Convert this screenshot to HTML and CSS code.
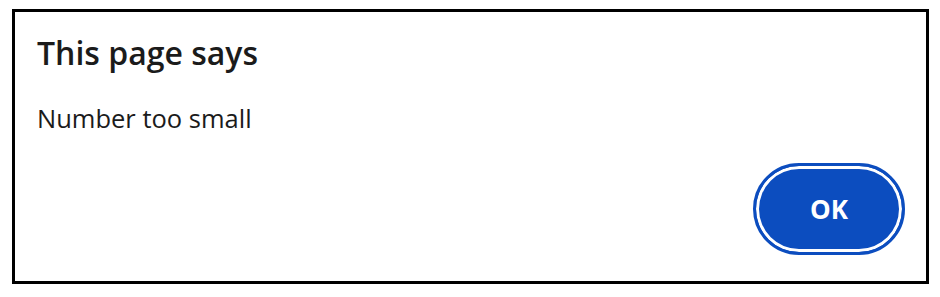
FILE: index.html
```html
<!DOCTYPE html>
<html lang="en">

<head>
    <meta charset="UTF-8">
    <meta name="viewport" content="width=device-width, initial-scale=1.0">
    <title>This page says</title>
    <link rel="stylesheet" href="styles.css">
</head>

<body>
    <div class="dialog">
        <h1 class="title">This page says</h1>
        <p class="message">Number too small</p>
        <div class="actions">
            <button class="ok">OK</button>
        </div>
    </div>
</body>

</html>
```

FILE: styles.css
```css
* {
    margin: 0;
    padding: 0;
    box-sizing: border-box;
}

body {
    background-color: white;
    font-family: "Open Sans", "Noto Sans", sans-serif;
    padding: 9px 11px 13px 12px;
}

.dialog {
    display: flex;
    flex-direction: column;
    width: 917px;
    height: 275px;
    border: 3px solid #000;
    background-color: white;
    padding: 21px 21px 26px 22px;
}

.title {
    font-size: 32px;
    font-weight: 600;
    line-height: 40px;
    color: #1b1b1b;
}

.message {
    margin-top: 30px;
    font-size: 25.5px;
    line-height: 30px;
    color: #1b1b1b;
}

.actions {
    display: flex;
    justify-content: flex-end;
    margin-top: auto;
}

.ok {
    width: 152px;
    height: 92px;
    border: 3px solid #0c4dbf;
    border-radius: 46px;
    box-shadow: inset 0 0 0 3px white;
    background-color: #0c4dbf;
    color: white;
    font-family: "Open Sans", "Noto Sans", sans-serif;
    font-size: 26px;
    font-weight: 700;
    cursor: pointer;
}
```
